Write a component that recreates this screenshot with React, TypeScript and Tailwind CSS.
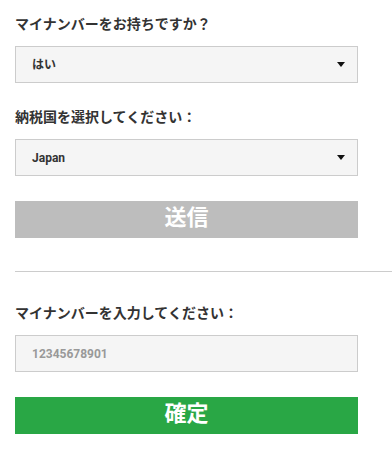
import type { ReactNode } from 'react';

const FONT = "font-['Roboto','Noto_Sans_CJK_JP',sans-serif]";

function Label({ children }: { children: ReactNode }) {
  return <p className="text-[14px] leading-[20px] font-bold text-[#333] mb-[12px]">{children}</p>;
}

function SelectBox({ value }: { value: string }) {
  return (
    <div className="w-[343px] h-[37px] border border-[#ccc] bg-[#f5f5f5] flex items-center justify-between pl-[16px] pr-[12px]">
      <span className="text-[12px] font-bold text-[#333]">{value}</span>
      <svg width="8" height="5" viewBox="0 0 8 5" className="block">
        <path d="M0 0h8L4 5z" fill="#111" />
      </svg>
    </div>
  );
}

export default function App() {
  return (
    <div className={`${FONT} bg-white min-h-[455px] pl-[15px] pt-[14px]`}>
      <Label>マイナンバーをお持ちですか？</Label>
      <SelectBox value="はい" />

      <div className="mt-[24px]">
        <Label>納税国を選択してください：</Label>
        <SelectBox value="Japan" />
      </div>

      <button
        type="button"
        className="mt-[25px] w-[343px] h-[37px] bg-[#bdbdbd] text-white text-[22px] font-bold leading-none flex items-center justify-center pb-[3px]"
      >
        送信
      </button>

      <div className="mt-[33px] h-px bg-[#ccc]" />

      <div className="mt-[31px]">
        <Label>マイナンバーを入力してください：</Label>
        <input
          readOnly
          placeholder="12345678901"
          className="w-[343px] h-[37px] border border-[#ccc] bg-[#f5f5f5] pl-[16px] text-[12px] font-bold placeholder:text-[#999] outline-none"
        />
      </div>

      <button
        type="button"
        className="mt-[25px] w-[343px] h-[37px] bg-[#29a745] text-white text-[22px] font-bold leading-none flex items-center justify-center pb-[3px]"
      >
        確定
      </button>
    </div>
  );
}
